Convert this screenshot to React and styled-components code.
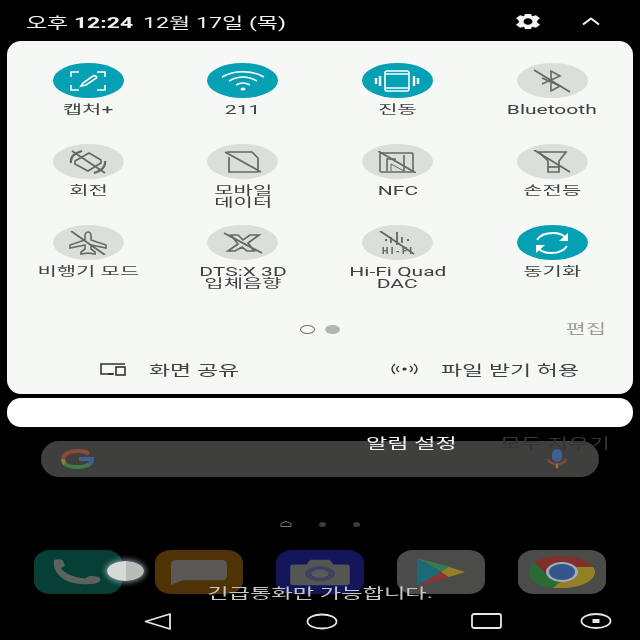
import React from 'react';
import styled, { createGlobalStyle } from 'styled-components';

const Global = createGlobalStyle`
  html, body { margin: 0; padding: 0; background: #000; }
  * { box-sizing: border-box; }
`;

const FONT = `Roboto, "Noto Sans CJK KR", "Noto Sans", sans-serif`;

const Screen = styled.div`
  position: relative;
  width: 640px;
  height: 640px;
  overflow: hidden;
  background: #000;
  font-family: ${FONT};
  display: flex;
  flex-direction: column;
  filter: blur(0.35px);
`;

// text in the shot is squeezed vertically, so it reads wider than normal
const Wide = styled.span`
  display: inline-block;
  white-space: nowrap;
  transform: scaleX(${(p) => p.$x || 1.68});
  transform-origin: ${(p) => p.$origin || 'center'};
`;

const StatusBar = styled.div`
  height: 41px;
  flex: none;
  display: flex;
  align-items: center;
  padding: 2px 40px 0 26px;
  color: #f2f2f2;
  font-size: 15px;
`;

const Clock = styled.div`
  display: flex;
  gap: 47px;
  flex: 1;
`;

const Strong = styled.b`
  font-weight: 700;
`;

const StatusIcons = styled.div`
  display: flex;
  align-items: center;
  gap: 41px;
`;

const Panel = styled.div`
  flex: none;
  width: 626px;
  height: 353px;
  margin-left: 7px;
  background: #f6f8f6;
  border-radius: 14px;
  display: flex;
  flex-direction: column;
  padding: 22px 4px 0;
`;

const Grid = styled.div`
  display: grid;
  grid-template-columns: repeat(4, 154.6px);
  grid-auto-rows: 81px;
`;

const Tile = styled.div`
  display: flex;
  flex-direction: column;
  align-items: center;
`;

const Pill = styled.div`
  width: 71px;
  height: 35px;
  border-radius: 50%;
  background: ${(p) => (p.$on ? '#06a0b5' : '#dcdedc')};
  color: ${(p) => (p.$on ? '#ffffff' : '#666866')};
  display: flex;
  align-items: center;
  justify-content: center;
`;

const Label = styled.div`
  margin-top: 6px;
  color: #3f4140;
  font-size: 12.5px;
  line-height: 11.5px;
  text-align: center;
`;

const PagerRow = styled.div`
  position: relative;
  margin-top: 11px;
  height: 24px;
  display: flex;
  align-items: center;
  justify-content: center;
  gap: 10px;
  padding-right: 1px;
`;

const Dot = styled.span`
  width: 15px;
  height: 9px;
  border-radius: 50%;
  background: ${(p) => (p.$filled ? '#b4b6b4' : 'transparent')};
  border: ${(p) => (p.$filled ? 'none' : '1.5px solid #6f716f')};
`;

const Edit = styled.div`
  position: absolute;
  right: 31px;
  top: 1px;
  color: #9a9c9a;
  font-size: 13px;
`;

const Shortcuts = styled.div`
  margin-top: 18px;
  display: flex;
  color: #3f4140;
  font-size: 13.5px;
`;

const Shortcut = styled.div`
  display: flex;
  align-items: center;
  gap: 22px;
  margin-left: ${(p) => p.$left}px;
`;

const Notice = styled.div`
  flex: none;
  width: 626px;
  height: 29px;
  margin: 4px 0 0 7px;
  background: #fff;
  border-radius: 14px;
`;

const HomeArea = styled.div`
  position: relative;
  flex: 1;
  display: flex;
  flex-direction: column;
  align-items: center;
`;

const SearchBar = styled.div`
  margin-top: 14px;
  width: 558px;
  height: 36px;
  border-radius: 18px;
  background: #3f403e;
  display: flex;
  align-items: center;
  justify-content: space-between;
  padding: 0 32px 0 20px;
`;

const NotifAction = styled.div`
  position: absolute;
  top: 5px;
  left: ${(p) => p.$left}px;
  color: ${(p) => p.$color};
  font-size: 14px;
`;

const HomeDots = styled.div`
  margin-top: 41px;
  height: 12px;
  display: flex;
  align-items: center;
  gap: 27px;
`;

const PageDot = styled.span`
  width: 7px;
  height: 5px;
  border-radius: 50%;
  background: #3c3c3c;
`;

const Dock = styled.div`
  margin-top: 20px;
  display: flex;
  gap: 33px;
`;

const AppIcon = styled.div`
  width: 88px;
  height: 44px;
  border-radius: 16px / 13px;
  background: ${(p) => p.$bg};
  display: flex;
  align-items: center;
  justify-content: center;
`;

const TouchDot = styled.div`
  position: absolute;
  left: 107px;
  top: 134px;
  width: 37px;
  height: 20px;
  border-radius: 50%;
  background: linear-gradient(90deg, #d6dbd6 50%, #b9bdb9 50%);
  box-shadow: 0 0 5px 2px rgba(190, 205, 225, 0.55);
`;

const Emergency = styled.div`
  position: absolute;
  top: 155px;
  left: 0;
  right: 0;
  text-align: center;
  color: #c8c8c8;
  font-size: 14px;
`;

const NavBar = styled.div`
  position: absolute;
  left: 0;
  right: 0;
  bottom: 0;
  height: 38px;
  color: #e8e8e8;
  display: flex;
  align-items: center;
  padding-left: 144px;
`;

const NavSlot = styled.div`
  width: ${(p) => p.$w}px;
  display: flex;
`;

const Slash = ({ d }) => <path d={d} fill="none" stroke="currentColor" strokeWidth="1.8" />;

const icons = {
  capture: (
    <svg width="36" height="20" viewBox="0 0 36 20" fill="none" stroke="currentColor" strokeWidth="1.6">
      <path d="M1 6V1h8M27 1h8v5M1 14v5h8M27 19h8v-5" />
      <path d="M11 15l2-3 10-7c1.500-1 4.500 .5 3.500 2L16 14l-5 1z" />
    </svg>
  ),
  wifi: (
    <svg width="46" height="20" viewBox="0 0 46 20" fill="none" stroke="currentColor" strokeWidth="1.5">
      <path d="M2 6C14-1 32-1 44 6" />
      <path d="M9 10c9-5 19-5 28 0" />
      <path d="M16 14c5-3 9-3 14 0" />
      <ellipse cx="23" cy="18" rx="2.500" ry="1.500" fill="currentColor" stroke="none" />
    </svg>
  ),
  vibrate: (
    <svg width="46" height="22" viewBox="0 0 46 22" fill="none" stroke="currentColor" strokeWidth="1.6">
      <rect x="11" y="1" width="24" height="20" rx="2" />
      <path d="M11 4h24M11 18h24" />
      <path d="M6 6v10M2 8v6M40 6v10M44 8v6" strokeWidth="2.400" />
    </svg>
  ),
  bluetooth: (
    <svg width="40" height="24" viewBox="0 0 40 24" fill="none" stroke="currentColor" strokeWidth="1.6">
      <path d="M10 15l18-8-9-5v20l9-5-18-8" />
      <Slash d="M2 1l36 22" />
    </svg>
  ),
  rotate: (
    <svg width="40" height="24" viewBox="0 0 40 24" fill="none" stroke="currentColor" strokeWidth="1.7">
      <path d="M21 3l12 7v3l-13 8-13-7v-3z" />
      <path d="M3 13C2 7 7 3 14 1M37 11c1 6-4 10-11 12" strokeWidth="2.200" />
      <Slash d="M4 1l33 22" />
    </svg>
  ),
  data: (
    <svg width="38" height="22" viewBox="0 0 38 22" fill="none" stroke="currentColor" strokeWidth="1.7">
      <path d="M5 6v15h29V7l-6-6H3" />
      <Slash d="M1 1l36 20" />
    </svg>
  ),
  nfc: (
    <svg width="38" height="22" viewBox="0 0 38 22" fill="none" stroke="currentColor" strokeWidth="1.6">
      <rect x="2" y="2" width="33" height="19" rx="1" />
      <path d="M9 20V8h9M26 20V4" />
      <path d="M13 20v-7l13 7" strokeWidth="1" />
      <Slash d="M0 0l38 22" />
    </svg>
  ),
  torch: (
    <svg width="38" height="24" viewBox="0 0 38 24" fill="none" stroke="currentColor" strokeWidth="1.7">
      <path d="M6 2h27l-7 9v11H15V11z" />
      <path d="M15 17h11" />
      <Slash d="M1 0l36 22" />
    </svg>
  ),
  plane: (
    <svg width="40" height="24" viewBox="0 0 40 24" fill="none" stroke="currentColor" strokeWidth="1.6">
      <path d="M20 1c2 0 3 2 3 4v4l15 5v3l-15-3v4l4 3v2l-7-1-7 1v-2l4-3v-4L2 17v-3l15-5V5c0-2 1-4 3-4z" />
      <Slash d="M3 0l34 24" />
    </svg>
  ),
  dts: (
    <svg width="40" height="22" viewBox="0 0 40 22" fill="none" stroke="currentColor" strokeWidth="1.700">
      <path d="M8 3h7l5 5 7-5h9l-11 8 6 8h-7l-5-4-7 4H5l10-7z" />
      <Slash d="M1 1l38 20" />
      <path d="M4 3l30 16" strokeWidth="1" />
    </svg>
  ),
  hifi: (
    <svg width="38" height="24" viewBox="0 0 38 24" fill="none" stroke="currentColor">
      <path d="M19 1v13M24 6v6M13 6v6" strokeWidth="1.800" />
      <path d="M7 9h2M29 9h2" strokeWidth="2" />
      <text x="19" y="22.500" textAnchor="middle" fontFamily="Roboto, sans-serif" fontWeight="900" fontSize="9" textLength="30" fill="currentColor" stroke="none">HI-FI</text>
      <Slash d="M2 0l34 23" />
    </svg>
  ),
  sync: (
    <svg width="36" height="22" viewBox="0 0 36 22" fill="none" stroke="currentColor" strokeWidth="1.800">
      <path d="M3 8C6 3 12 1 19 1c5 0 9 1 12 4" />
      <path d="M34 1v8h-9z" fill="currentColor" stroke="none" />
      <path d="M33 14c-3 5-9 7-16 7-5 0-9-1-12-4" />
      <path d="M2 21v-8h9z" fill="currentColor" stroke="none" />
    </svg>
  ),
};

const tiles = [
  { icon: 'capture', label: ['캡처+'], on: true },
  { icon: 'wifi', label: ['211'], on: true },
  { icon: 'vibrate', label: ['진동'], on: true },
  { icon: 'bluetooth', label: ['Bluetooth'] },
  { icon: 'rotate', label: ['회전'] },
  { icon: 'data', label: ['모바일', '데이터'] },
  { icon: 'nfc', label: ['NFC'] },
  { icon: 'torch', label: ['손전등'] },
  { icon: 'plane', label: ['비행기 모드'] },
  { icon: 'dts', label: ['DTS:X 3D', '입체음향'] },
  { icon: 'hifi', label: ['Hi-Fi Quad', 'DAC'] },
  { icon: 'sync', label: ['동기화'], on: true },
];

export default function App() {
  return (
    <>
      <Global />
      <Screen>
        <StatusBar>
          <Clock>
            <Wide $origin="left center" $x={1.53}>오후 <Strong>12:24</Strong></Wide>
            <Wide $origin="left center" $x={1.54}>12월 17일 (목)</Wide>
          </Clock>
          <StatusIcons>
            <svg width="26" height="15" viewBox="0 0 26 15">
              <path fillRule="evenodd" fill="#f4f4f4" d="M10 0h6l1 2.200 4-1 4 3-2.500 2-.5 1.300.5 1.300 2.500 2-4 3-4-1-1 2.200h-6l-1-2.200-4 1-4-3 2.500-2 .5-1.300-.5-1.300-2.500-2 4-3 4 1zM13 4.200c-2.500 0-4.500 1.500-4.500 3.300s2 3.300 4.500 3.300 4.500-1.500 4.500-3.300-2-3.300-4.500-3.300z" />
            </svg>
            <svg width="18" height="9" viewBox="0 0 18 9" fill="none" stroke="#f4f4f4" strokeWidth="2">
              <path d="M1 7.500L9 1.500l8 6" />
            </svg>
          </StatusIcons>
        </StatusBar>

        <Panel>
          <Grid>
            {tiles.map((t) => (
              <Tile key={t.icon}>
                <Pill $on={t.on}>{icons[t.icon]}</Pill>
                <Label>
                  {t.label.map((line) => (
                    <div key={line}><Wide>{line}</Wide></div>
                  ))}
                </Label>
              </Tile>
            ))}
          </Grid>
          <PagerRow>
            <Dot />
            <Dot $filled />
            <Edit><Wide>편집</Wide></Edit>
          </PagerRow>
          <Shortcuts>
            <Shortcut $left={88}>
              <svg width="28" height="14" viewBox="0 0 28 14" fill="none" stroke="#333" strokeWidth="1.6">
                <path d="M15 12H2V2h24" />
                <path d="M9 12h5" strokeWidth="2" />
                <rect x="17" y="5" width="9" height="8" />
              </svg>
              <Wide $origin="left center" $x={1.7}>화면 공유</Wide>
            </Shortcut>
            <Shortcut $left={188}>
              <svg width="29" height="12" viewBox="0 0 29 12" fill="none" stroke="#333" strokeWidth="1.500">
                <path d="M5 1C1 4 1 8 5 11M9 3C6 5 6 7 9 9M24 1c4 3 4 7 0 10M20 3c3 2 3 4 0 6" />
                <ellipse cx="14.500" cy="6" rx="2.200" ry="1.500" fill="#333" stroke="none" />
              </svg>
              <Wide $origin="left center" $x={1.7}>파일 받기 허용</Wide>
            </Shortcut>
          </Shortcuts>
        </Panel>

        <Notice />

        <HomeArea>
          <SearchBar>
            <svg width="33" height="20" viewBox="0 0 33 20" fill="none" strokeWidth="4">
              <path d="M28 5C25 2.500 21 2 16.500 2 8 2 2 5.500 2 10" stroke="#8a4a3c" />
              <path d="M2 10c0 2 .5 3.500 2 5" stroke="#8a7a35" />
              <path d="M4 15c3 2.500 7 3 12.500 3 5 0 9-.5 12-3" stroke="#3f7a48" />
              <path d="M18 10h13c0 2-.5 3.500-2.500 5" stroke="#3f5f96" />
            </svg>
            <svg width="20" height="20" viewBox="0 0 20 20" fill="none">
              <rect x="5" y="0" width="10" height="13" rx="5" fill="#3f5f96" />
              <path d="M1 10c1 4 5 5 9 5s8-1 9-5" stroke="#8a4a3c" strokeWidth="2" />
              <path d="M10 15v4" stroke="#8a7a35" strokeWidth="2.500" />
            </svg>
          </SearchBar>
          <NotifAction $left={366} $color="#f2f2f2"><Wide $origin="left center" $x={1.65}>알림 설정</Wide></NotifAction>
          <NotifAction $left={500} $color="#343533"><Wide $origin="left center" $x={1.62}>모두 지우기</Wide></NotifAction>

          <HomeDots>
            <svg width="12" height="6" viewBox="0 0 12 6" fill="none" stroke="#777" strokeWidth="1">
              <path d="M1 2.500L6 .5l5 2v3H1z" />
            </svg>
            <PageDot />
            <PageDot />
          </HomeDots>

          <Dock>
            <AppIcon $bg="#063f35">
              <svg width="54" height="26" viewBox="0 0 54 28" preserveAspectRatio="none">
                <path d="M3 1c3-1 7-1 9 1l2 5-4 3c3 6 14 10 24 11l5-3 8 1c3 1 3 4 1 6-4 2-14 3-24 1C12 24 1 14 3 1z" fill="#5c635e" />
              </svg>
            </AppIcon>
            <AppIcon $bg="#4f3306">
              <svg width="56" height="25" viewBox="0 0 56 27" preserveAspectRatio="none">
                <path d="M5 0h46c3 0 5 2 5 5v12c0 3-2 5-5 5H12l-12 5V5c0-3 2-5 5-5z" fill="#5a5854" />
              </svg>
            </AppIcon>
            <AppIcon $bg="#14165c">
              <svg width="66" height="28" viewBox="0 0 62 34" preserveAspectRatio="none">
                <path d="M6 8h12l4-6h18l4 6h12a3 3 0 0 1 3 3v19a3 3 0 0 1-3 3H6a3 3 0 0 1-3-3V11a3 3 0 0 1 3-3z" fill="#555553" />
                <ellipse cx="31" cy="19" rx="14" ry="9" fill="#3f3f5e" />
                <ellipse cx="31" cy="19" rx="8" ry="5" fill="#5a5a5e" />
              </svg>
            </AppIcon>
            <AppIcon $bg="#4b4c49">
              <svg width="50" height="28" viewBox="0 0 50 28">
                <path d="M1 0l24 14L1 28z" fill="#1a6a78" />
                <path d="M1 0l34 9-9 5z" fill="#3a7a50" />
                <path d="M1 28l34-9-9-5z" fill="#8f3333" />
                <path d="M33 9l16 5-16 5-8-5z" fill="#958028" />
              </svg>
            </AppIcon>
            <AppIcon $bg="#4b4c49">
              <svg width="66" height="32" viewBox="0 0 66 32">
                <path d="M33 0c12 0 24 3 31 11H33c-9 0-14 2-17 6L5 6C12 2 22 0 33 0z" fill="#80302a" />
                <path d="M5 6l13 14c4 4 9 5 15 5l-9 7C10 31 0 24 0 16c0-4 2-7 5-10z" fill="#2a6a35" />
                <path d="M64 11c2 2 2 4 2 5 0 9-15 16-33 16h-9l12-10c5-1 8-3 8-6 0-2-1-4-4-5z" fill="#948026" />
                <ellipse cx="33" cy="16" rx="16" ry="10" fill="#a4acb5" />
                <ellipse cx="33" cy="16" rx="13" ry="8" fill="#34568f" />
              </svg>
            </AppIcon>
          </Dock>

          <TouchDot />
          <Emergency><Wide $x={1.66}>긴급통화만 가능합니다.</Wide></Emergency>
        </HomeArea>

        <NavBar>
          <NavSlot $w={162}>
            <svg width="28" height="17" viewBox="0 0 28 17" fill="none" stroke="currentColor" strokeWidth="1.800" strokeLinejoin="round">
              <path d="M1.500 8.500L26 1v15z" />
            </svg>
          </NavSlot>
          <NavSlot $w={165}>
            <svg width="32" height="17" viewBox="0 0 32 17" fill="none" stroke="currentColor" strokeWidth="1.800">
              <ellipse cx="16" cy="8.500" rx="14.500" ry="7" />
            </svg>
          </NavSlot>
          <NavSlot $w={109}>
            <svg width="32" height="16" viewBox="0 0 32 16" fill="none" stroke="currentColor" strokeWidth="1.800">
              <rect x="1" y="1" width="29" height="14" rx="2" />
            </svg>
          </NavSlot>
          <NavSlot $w={32}>
            <svg width="32" height="16" viewBox="0 0 32 16" fill="none" stroke="currentColor" strokeWidth="1.800">
              <ellipse cx="16" cy="8" rx="14.500" ry="7" />
              <rect x="12.500" y="6" width="7" height="4" fill="currentColor" stroke="none" />
            </svg>
          </NavSlot>
        </NavBar>
      </Screen>
    </>
  );
}
